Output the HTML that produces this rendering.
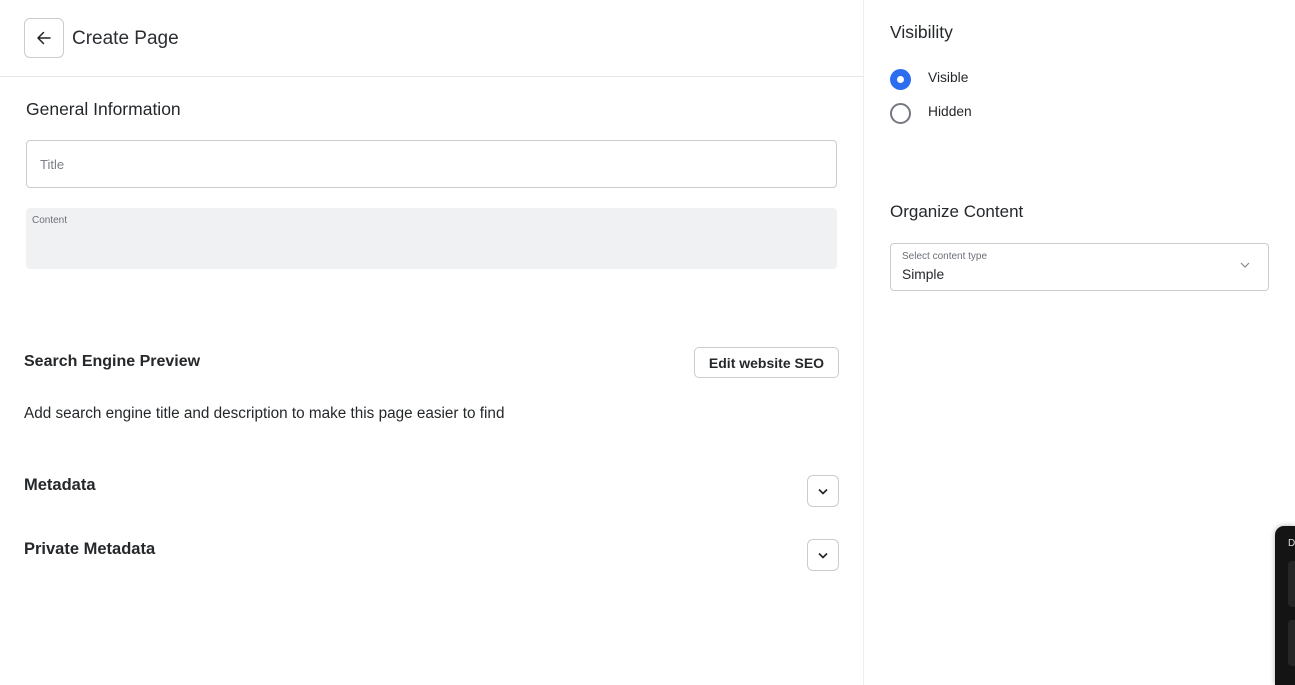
<!DOCTYPE html>
<html style="overflow:hidden;height:685px"><head><style>
*{box-sizing:border-box;margin:0;padding:0}
body{width:1295px;height:685px;overflow:hidden;background:#fff;font-family:"Liberation Sans",sans-serif;color:#25282b;position:relative}
.a{position:absolute}
.chev{width:32px;height:32px;border:1px solid #c9ccd1;border-radius:6px;}
</style></head><body>
<div class="a" style="left:24px;top:18px;width:40px;height:40px;border:1px solid #c9ccd1;border-radius:6px;">
<svg width="40" height="40" viewBox="0 0 40 40" style="position:absolute;left:-1px;top:-1px"><path d="M26 20H14M19.5 14.5L14 20l5.5 5.5" stroke="#222" stroke-width="1.5" fill="none" stroke-linecap="round" stroke-linejoin="round"/></svg></div>
<div class="a" style="left:72px;top:28px;font-size:19px;color:#2b2e33">Create Page</div>
<div class="a" style="left:0;top:76px;width:863px;height:1px;background:#e4e6e9"></div>
<div class="a" style="left:863px;top:0;width:1px;height:685px;background:#eceef0"></div>
<div class="a" style="left:26px;top:99px;font-size:17.5px">General Information</div>
<div class="a" style="left:26px;top:140px;width:811px;height:48px;border:1px solid #c9ccd1;border-radius:4px"></div>
<div class="a" style="left:40px;top:157px;font-size:13px;color:#7b8087">Title</div>
<div class="a" style="left:26px;top:208px;width:811px;height:61px;background:#f0f1f3;border-radius:4px"></div>
<div class="a" style="left:32px;top:215px;font-size:10px;color:#6b7077">Content</div>
<div class="a" style="left:24px;top:353px;font-size:16px;font-weight:bold">Search Engine Preview</div>
<div class="a" style="left:694px;top:347px;width:145px;height:31px;border:1px solid #c9ccd1;border-radius:5px;font-size:14px;font-weight:bold;text-align:center;line-height:30px">Edit website SEO</div>
<div class="a" style="left:24px;top:405px;font-size:15.3px">Add search engine title and description to make this page easier to find</div>
<div class="a" style="left:24px;top:476px;font-size:16.5px;font-weight:bold">Metadata</div>
<div class="a chev" style="left:807px;top:475px"><svg width="30" height="30" viewBox="0 0 30 30"><path d="M11 13.5l4 4 4-4" stroke="#222" stroke-width="1.6" fill="none"/></svg></div>
<div class="a" style="left:24px;top:540px;font-size:16.5px;font-weight:bold">Private Metadata</div>
<div class="a chev" style="left:807px;top:539px"><svg width="30" height="30" viewBox="0 0 30 30"><path d="M11 13.5l4 4 4-4" stroke="#222" stroke-width="1.6" fill="none"/></svg></div>
<div class="a" style="left:890px;top:22px;font-size:17.5px">Visibility</div>
<div class="a" style="left:890px;top:69px;width:21px;height:21px;border-radius:50%;background:#2d6ef0"><div class="a" style="left:7px;top:7px;width:7px;height:7px;border-radius:50%;background:#fff"></div></div>
<div class="a" style="left:928px;top:70px;font-size:13.8px">Visible</div>
<div class="a" style="left:890px;top:103px;width:21px;height:21px;border-radius:50%;border:2px solid #75797f"></div>
<div class="a" style="left:928px;top:104px;font-size:13.8px">Hidden</div>
<div class="a" style="left:890px;top:202px;font-size:17px">Organize Content</div>
<div class="a" style="left:890px;top:243px;width:379px;height:48px;border:1px solid #c9ccd1;border-radius:4px"></div>
<div class="a" style="left:902px;top:251px;font-size:10px;color:#6b7077">Select content type</div>
<div class="a" style="left:902px;top:267px;font-size:13.8px">Simple</div>
<svg class="a" style="left:1238px;top:259px" width="14" height="12"><path d="M3 4l4 4 4-4" stroke="#888" stroke-width="1.2" fill="none"/></svg>
<div class="a" style="left:1275px;top:526px;width:20px;height:159px;background:#141414;border-radius:9px 0 0 0;box-shadow:0 0 6px rgba(0,0,0,.3)"></div>
<div class="a" style="left:1288px;top:538px;font-size:10px;color:#ddd">D</div>
<div class="a" style="left:1288px;top:561px;width:7px;height:46px;background:#262626;border-radius:4px 0 0 4px"></div>
<div class="a" style="left:1288px;top:620px;width:7px;height:46px;background:#262626;border-radius:4px 0 0 4px"></div>
</body></html>
